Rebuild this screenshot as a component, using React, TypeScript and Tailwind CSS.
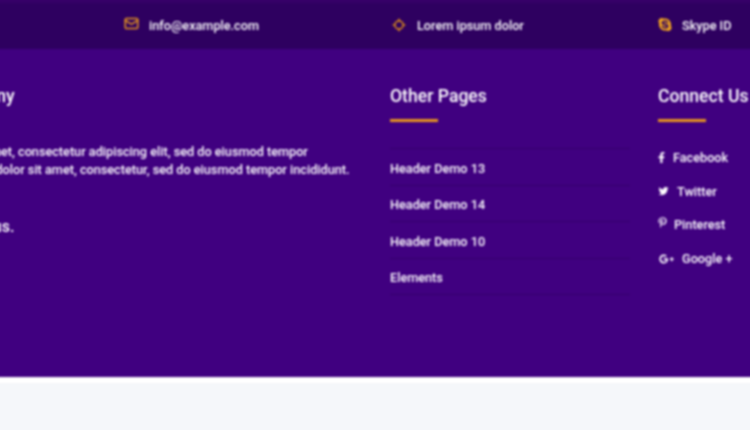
import { Mail, Locate } from 'lucide-react';
import { FaSkype, FaFacebookF, FaTwitter, FaPinterestP, FaGooglePlusG } from 'react-icons/fa';

const pages = ['Header Demo 13', 'Header Demo 14', 'Header Demo 10', 'Elements'];

const social = [
  { label: 'Facebook', icon: <FaFacebookF className="h-[11px] w-[7px]" />, gap: 'gap-[8px]' },
  { label: 'Twitter', icon: <FaTwitter className="h-[10px] w-[11px]" />, gap: 'gap-[8px]' },
  { label: 'Pinterest', icon: <FaPinterestP className="h-[11px] w-[9px] -translate-y-[2px]" />, gap: 'gap-[7px]' },
  { label: 'Google +', icon: <FaGooglePlusG className="h-[12px] w-[17px]" />, gap: 'gap-[7px]' },
];

export default function App() {
  return (
    <div className="h-[430px] w-[750px] overflow-hidden bg-[#f5f7fa] font-['Roboto',sans-serif] text-white">
      {/* bleeds past the page so the soft edge stays out of view */}
      <div className="-mx-[5px] -mt-[4px] blur-[0.8px]">
        {/* Contact strip */}
        <div className="flex h-[53px] items-center border-t-[7px] border-[#360068] bg-[#2e0060] pl-[129px] text-[12.7px] font-medium">
          <div className="flex w-[268px] items-center gap-[10px]">
            <Mail className="h-[15px] w-[15px] -translate-y-[2px] text-[#e8961e]" strokeWidth={2.4} />
            <span>info@example.com</span>
          </div>
          <div className="flex w-[266px] items-center gap-[11px]">
            <Locate className="h-[14px] w-[14px] -translate-y-[1px] text-[#d98a1e]" strokeWidth={2.6} />
            <span>Lorem ipsum dolor</span>
          </div>
          <div className="flex items-center gap-[10px]">
            <FaSkype className="h-[15px] w-[14px] -translate-y-[1px] text-[#f0a41e]" />
            <span>Skype ID</span>
          </div>
        </div>

        {/* Footer columns */}
        <div className="h-[328px] bg-[#400080]">
          <div className="-ml-[139px] flex w-[920px] pt-[37px]">
            <div className="w-[534px] shrink-0">
              <h3 className="text-[17.6px] font-medium leading-[20px]">About Our Company</h3>
              <p className="mt-[37px] whitespace-nowrap text-[12.7px] font-medium leading-[18px]">
                Lorem ipsum dolor sit amet, consectetur adipiscing elit, sed do eiusmod tempor
                <br />
                Ut enim ad minima velit, dolor sit amet, consectetur, sed do eiusmod tempor incididunt.
              </p>
              <p className="mt-[38px] text-[16px] font-medium leading-[20px]">Thanks for visiting us.</p>
            </div>

            <div className="w-[268px] shrink-0">
              <h3 className="text-[17.6px] font-medium leading-[20px]">Other Pages</h3>
              <div className="mt-[13px] h-[3px] w-[48px] bg-[#e8961e]" />
              <ul className="mt-[26px] w-[240px] border-t border-[#34006c]">
                {pages.map((page) => (
                  <li
                    key={page}
                    className="flex h-[36.5px] items-center border-b border-[#34006c] pt-[3px] text-[12.7px] font-medium"
                  >
                    {page}
                  </li>
                ))}
              </ul>
            </div>

            <div className="shrink-0">
              <h3 className="text-[17.6px] font-medium leading-[20px]">Connect Us</h3>
              <div className="mt-[13px] h-[3px] w-[48px] bg-[#e8961e]" />
              <ul className="mt-[27px] flex flex-col gap-[16.7px] text-[12.7px] font-medium leading-[17px]">
                {social.map((item) => (
                  <li key={item.label} className={`flex items-center ${item.gap}`}>
                    {item.icon}
                    <span>{item.label}</span>
                  </li>
                ))}
              </ul>
            </div>
          </div>
        </div>

        <div className="h-[6px] bg-white" />
      </div>
    </div>
  );
}
